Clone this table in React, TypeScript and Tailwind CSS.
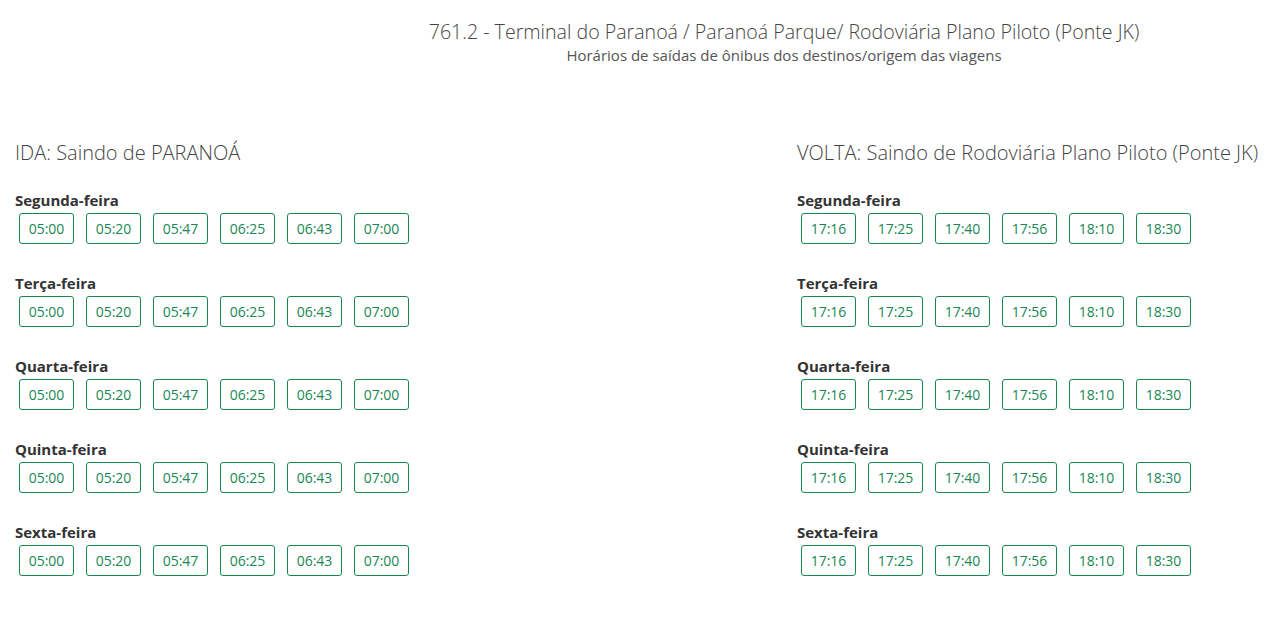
import React from "react";

const days = ["Segunda-feira", "Terça-feira", "Quarta-feira", "Quinta-feira", "Sexta-feira"];
const ida = ["05:00", "05:20", "05:47", "06:25", "06:43", "07:00"];
const volta = ["17:16", "17:25", "17:40", "17:56", "18:10", "18:30"];

function Column({ title, times }: { title: string; times: string[] }) {
  return (
    <div>
      <h2 className="text-[20px] leading-[24px] font-light text-[#444]">{title}</h2>
      <div className="mt-[25px] flex flex-col gap-[29px]">
        {days.map((d) => (
          <div key={d}>
            <div className="text-[15px] leading-[20px] font-bold text-[#333]">{d}</div>
            <div className="mt-[3px] flex gap-[12px] pl-[4px]">
              {times.map((t) => (
                <div
                  key={t}
                  className="w-[55px] h-[31px] flex items-center justify-center border border-[#198754] rounded-[3px] text-[14px] text-[#198754]"
                >
                  {t}
                </div>
              ))}
            </div>
          </div>
        ))}
      </div>
    </div>
  );
}

export default function App() {
  return (
    <div className="w-[1271px] h-[620px] bg-white" style={{ fontFamily: "'Open Sans', 'Noto Sans', sans-serif" }}>
      <div className="pl-[297px] pt-[19px] text-center">
        <h1 className="text-[19.6px] leading-[26px] font-light text-[#444]">
          761.2 - Terminal do Paranoá / Paranoá Parque/ Rodoviária Plano Piloto (Ponte JK)
        </h1>
        <p className="text-[15px] leading-[20px] text-[#555]">Horários de saídas de ônibus dos destinos/origem das viagens</p>
      </div>
      <div className="mt-[76px] grid grid-cols-[782px_1fr] pl-[15px]">
        <Column title="IDA: Saindo de PARANOÁ" times={ida} />
        <Column title="VOLTA: Saindo de Rodoviária Plano Piloto (Ponte JK)" times={volta} />
      </div>
    </div>
  );
}
